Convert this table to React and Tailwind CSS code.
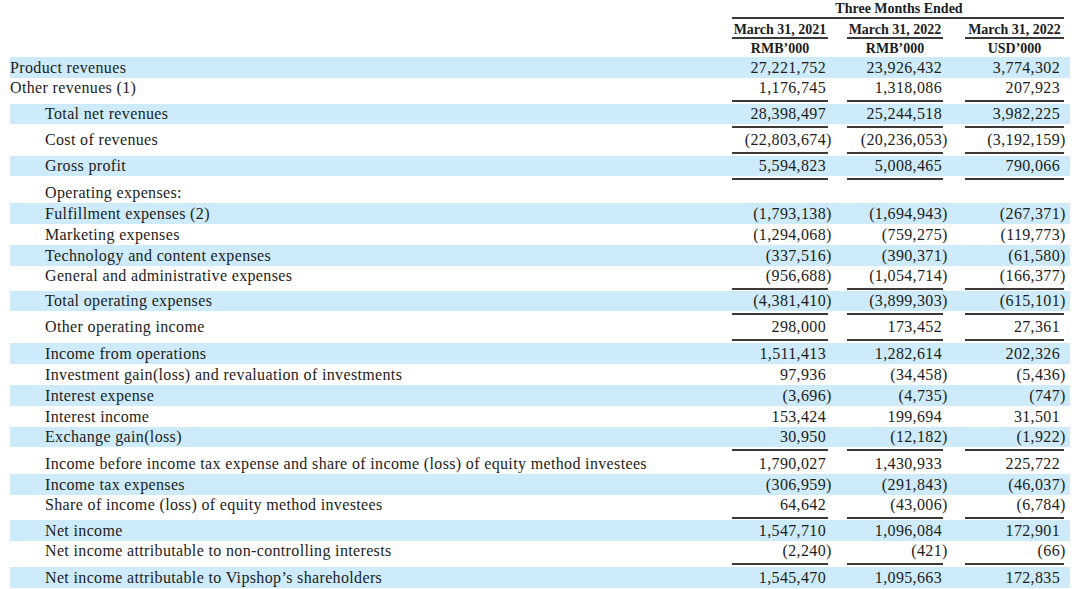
const rows = [
  { label: 'Product revenues', band: true, values: ['27,221,752', '23,926,432', '3,774,302'] },
  { label: 'Other revenues (1)', ul: true, values: ['1,176,745', '1,318,086', '207,923'] },
  { label: 'Total net revenues', indent: true, band: true, ul: true, values: ['28,398,497', '25,244,518', '3,982,225'] },
  { label: 'Cost of revenues', indent: true, ul: true, values: ['(22,803,674)', '(20,236,053)', '(3,192,159)'] },
  { label: 'Gross profit', indent: true, band: true, ul: true, values: ['5,594,823', '5,008,465', '790,066'] },
  { label: 'Operating expenses:', indent: true, values: ['', '', ''] },
  { label: 'Fulfillment expenses (2)', indent: true, band: true, values: ['(1,793,138)', '(1,694,943)', '(267,371)'] },
  { label: 'Marketing expenses', indent: true, values: ['(1,294,068)', '(759,275)', '(119,773)'] },
  { label: 'Technology and content expenses', indent: true, band: true, values: ['(337,516)', '(390,371)', '(61,580)'] },
  { label: 'General and administrative expenses', indent: true, ul: true, tight: true, values: ['(956,688)', '(1,054,714)', '(166,377)'] },
  { label: 'Total operating expenses', indent: true, band: true, ul: true, values: ['(4,381,410)', '(3,899,303)', '(615,101)'] },
  { label: 'Other operating income', indent: true, ul: true, values: ['298,000', '173,452', '27,361'] },
  { label: 'Income from operations', indent: true, band: true, values: ['1,511,413', '1,282,614', '202,326'] },
  { label: 'Investment gain(loss) and revaluation of investments', indent: true, values: ['97,936', '(34,458)', '(5,436)'] },
  { label: 'Interest expense', indent: true, band: true, values: ['(3,696)', '(4,735)', '(747)'] },
  { label: 'Interest income', indent: true, values: ['153,424', '199,694', '31,501'] },
  { label: 'Exchange gain(loss)', indent: true, band: true, ul: true, values: ['30,950', '(12,182)', '(1,922)'] },
  { label: 'Income before income tax expense and share of income (loss) of equity method investees', indent: true, values: ['1,790,027', '1,430,933', '225,722'] },
  { label: 'Income tax expenses', indent: true, band: true, values: ['(306,959)', '(291,843)', '(46,037)'] },
  { label: 'Share of income (loss) of equity method investees', indent: true, ul: true, tight: true, values: ['64,642', '(43,006)', '(6,784)'] },
  { label: 'Net income', indent: true, band: true, values: ['1,547,710', '1,096,084', '172,901'] },
  { label: 'Net income attributable to non-controlling interests', indent: true, ul: true, values: ['(2,240)', '(421)', '(66)'] },
  { label: 'Net income attributable to Vipshop’s shareholders', indent: true, band: true, values: ['1,545,470', '1,095,663', '172,835'] },
]

// column boxes: 732-828, 847-943, 965-1064
const cols = ['w-[96px]', 'ml-[19px] w-[96px]', 'ml-[22px] w-[99px]']
const pads = ['pr-[2px]', 'pr-[1px]', 'pr-[4px]']

function Value({ v }) {
  if (v.startsWith('(')) {
    return (
      <span>
        {v.slice(0, -1)}
        <span className="inline-block w-0">)</span>
      </span>
    )
  }
  return <span>{v}</span>
}

function Row({ row }) {
  return (
    <div>
      <div
        className={`flex items-center ${row.ul ? 'h-[20px]' : 'h-[21px]'} ${
          row.band ? 'bg-[#cdebfa]' : ''
        }`}
      >
        <div className={`w-[722px] whitespace-nowrap ${row.indent ? 'pl-[35px]' : ''}`}>
          {row.label}
        </div>
        {row.values.map((v, i) => (
          <div key={i} className={`${cols[i]} ${pads[i]} text-right whitespace-nowrap`}>
            <Value v={v} />
          </div>
        ))}
      </div>
      {row.ul && (
        <div className={`flex pt-[2px] ${row.tight ? 'h-[5px]' : 'h-[6px]'}`}>
          <div className="w-[722px]" />
          {cols.map((c, i) => (
            <div key={i} className={`${c} h-[2px] bg-[#3a3a3a]`} />
          ))}
        </div>
      )}
    </div>
  )
}

export default function App() {
  return (
    <div className="w-[1080px] h-[589px] overflow-hidden bg-white text-[#1c1c1c] font-['Liberation_Serif',serif] text-[16px] tracking-[0.35px] leading-[20px]">
      {/* Header */}
      <div className="mx-[10px] text-[14px] font-bold tracking-normal leading-[17px]">
        <div className="flex">
          <div className="w-[722px]" />
          <div className="w-[332px] h-[19px] text-center border-b-2 border-[#3a3a3a] pl-[2px]">
            Three Months Ended
          </div>
        </div>
        <div className="flex">
          <div className="w-[722px]" />
          {['March 31, 2021', 'March 31, 2022', 'March 31, 2022'].map((t, i) => (
            <div key={i} className={`${cols[i]} h-[20px] pt-[2px] text-center border-b-2 border-[#3a3a3a] whitespace-nowrap`}>
              {t}
            </div>
          ))}
        </div>
        <div className="flex h-[18px] items-center">
          <div className="w-[722px]" />
          {['RMB’000', 'RMB’000', 'USD’000'].map((t, i) => (
            <div key={i} className={`${cols[i]} text-center`}>
              {t}
            </div>
          ))}
        </div>
      </div>

      {/* Body */}
      <div className="mx-[10px]">
        {rows.map((row, i) => (
          <Row key={i} row={row} />
        ))}
      </div>
    </div>
  )
}
